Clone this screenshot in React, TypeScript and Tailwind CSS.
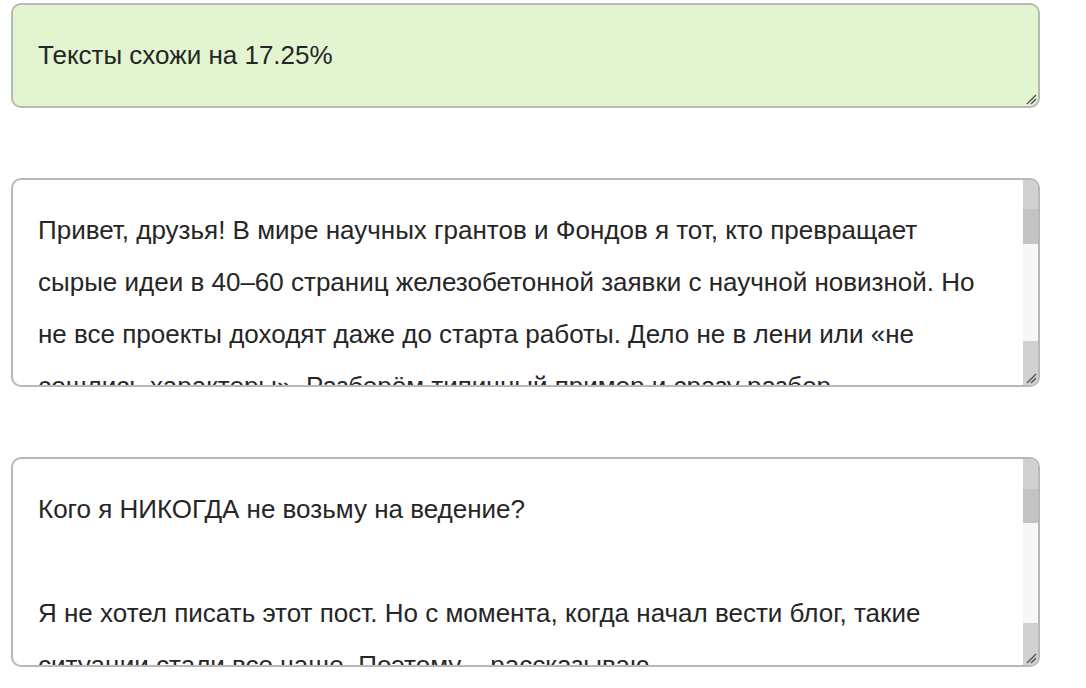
import React from "react";

function Grip() {
  return (
    <svg
      width="12"
      height="12"
      viewBox="0 0 12 12"
      className="absolute bottom-[1px] right-[1px]"
    >
      <path d="M2 11 L11 2" stroke="#555" strokeWidth="1.4" />
      <path d="M6 11 L11 6" stroke="#555" strokeWidth="1.4" />
    </svg>
  );
}

function Scroll({ top, thumb, track }: { top: number; thumb: number; track: number }) {
  return (
    <div className="absolute right-0 top-0 bottom-0 flex w-[15px] flex-col">
      <div className="bg-[#cfd1d3]" style={{ height: top }} />
      <div className="bg-[#c2c4c6]" style={{ height: thumb }} />
      <div className="bg-[#f7f7f7]" style={{ height: track }} />
      <div className="relative flex-1 bg-[#cfd1d3]">
        <Grip />
      </div>
    </div>
  );
}

function Box({
  children,
  scroll,
  green,
  h,
}: {
  children: React.ReactNode;
  scroll?: { top: number; thumb: number; track: number };
  green?: boolean;
  h: string;
}) {
  return (
    <div
      className={`relative overflow-hidden rounded-[10px] border-2 border-[#b8b8b8] ${h} ${
        green ? "bg-[#e3f5d0]" : "bg-white"
      }`}
    >
      <div className="whitespace-nowrap px-[25px] pt-[24px] text-[26px] leading-[52px] text-[#262626]">
        {children}
      </div>
      {scroll ? <Scroll {...scroll} /> : <Grip />}
    </div>
  );
}

export default function App() {
  return (
    <div
      className="flex w-[1040px] flex-col gap-[70px] pl-[11px] pt-[3px] bg-white"
      style={{ fontFamily: '"Liberation Sans", Arial, sans-serif' }}
    >
      <Box green h="h-[105px]">
        <p>Тексты схожи на 17.25%</p>
      </Box>
      <Box h="h-[209px]" scroll={{ top: 29, thumb: 35, track: 97 }}>
        <p>
          Привет, друзья! В мире научных грантов и Фондов я тот, кто превращает
          <br />
          сырые идеи в 40–60 страниц железобетонной заявки с научной новизной. Но
          <br />
          не все проекты доходят даже до старта работы. Дело не в лени или «не
          <br />
          сошлись характеры». Разберём типичный пример и сразу разбор
        </p>
      </Box>
      <Box h="h-[210px]" scroll={{ top: 30, thumb: 34, track: 100 }}>
        <p>Кого я НИКОГДА не возьму на ведение?</p>
        <p>&nbsp;</p>
        <p>
          Я не хотел писать этот пост. Но с момента, когда начал вести блог, такие
          <br />
          ситуации стали все чаще. Поэтому – рассказываю
        </p>
      </Box>
    </div>
  );
}
